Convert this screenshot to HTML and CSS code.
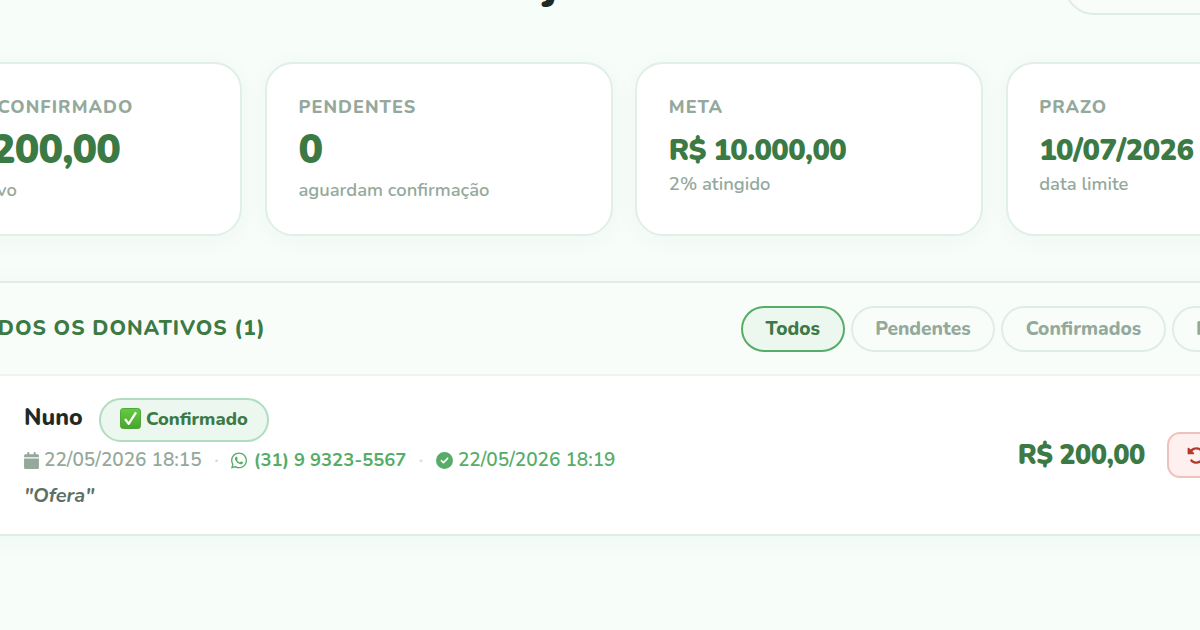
FILE: index.html
```html
<!DOCTYPE html>
<html lang="pt-BR">
<head>
  <meta charset="UTF-8">
  <meta name="viewport" content="width=device-width, initial-scale=1.0">
  <title>Donativos</title>
  <link rel="stylesheet" href="styles.css">
</head>
<body>
  <div class="page">
    <header class="page-header">
      <h1>Projeto</h1>
      <button class="btn-header" aria-label="Atualizar"></button>
    </header>

    <section class="stats">
      <div class="stat-card">
        <div class="stat-label">Total confirmado</div>
        <div class="stat-value">R$ 200,00</div>
        <div class="stat-sub">1 donativo</div>
      </div>
      <div class="stat-card">
        <div class="stat-label">Pendentes</div>
        <div class="stat-value">0</div>
        <div class="stat-sub">aguardam confirmação</div>
      </div>
      <div class="stat-card">
        <div class="stat-label">Meta</div>
        <div class="stat-value small">R$ 10.000,00</div>
        <div class="stat-sub">2% atingido</div>
      </div>
      <div class="stat-card">
        <div class="stat-label">Prazo</div>
        <div class="stat-value small">10/07/2026</div>
        <div class="stat-sub">data limite</div>
      </div>
    </section>

    <section class="panel">
      <div class="panel-header">
        <h2>Todos os donativos (1)</h2>
        <div class="filters">
          <button class="filter filter-all active">Todos</button>
          <button class="filter filter-pending">Pendentes</button>
          <button class="filter filter-confirmed">Confirmados</button>
          <button class="filter filter-rejected">Rejeitados</button>
        </div>
      </div>

      <div class="donation">
        <div class="donation-info">
          <div class="donor">
            <span class="donor-name">Nuno</span>
            <span class="badge">
              <svg class="check" viewBox="0 0 22 22">
                <defs>
                  <linearGradient id="checkFill" x1="0" y1="0" x2="0" y2="1">
                    <stop offset="0" stop-color="#66cb42"/>
                    <stop offset="1" stop-color="#46a52c"/>
                  </linearGradient>
                </defs>
                <rect x=".5" y=".5" width="21" height="21" rx="3" fill="url(#checkFill)" stroke="#4ba335"/>
                <path d="M5.300 11.500l3.800 5.100L16.800 4.600" fill="none" stroke="#fff" stroke-width="2.400" stroke-linejoin="round"/>
              </svg>
              <span>Confirmado</span>
            </span>
          </div>
          <div class="meta">
            <svg class="icon calendar" viewBox="0 0 448 512"><path d="M96 32V64H48C21.500 64 0 85.500 0 112v48H448V112c0-26.500-21.500-48-48-48H352V32c0-17.700-14.300-32-32-32s-32 14.300-32 32V64H160V32c0-17.700-14.300-32-32-32S96 14.300 96 32zM448 192H0V464c0 26.500 21.500 48 48 48H400c26.500 0 48-21.500 48-48V192z"/></svg>
            <span>22/05/2026 18:15</span>
            <span class="dot">·</span>
            <a class="phone" href="#">
              <svg class="icon whatsapp" viewBox="0 0 448 512"><path d="M380.900 97.100C339 55.100 283.200 32 223.900 32c-122.400 0-222 99.600-222 222 0 39.100 10.200 77.300 29.600 111L0 480l117.700-30.900c32.400 17.700 68.900 27 106.100 27h.1c122.300 0 224.100-99.600 224.100-222 0-59.300-25.200-115-67.100-157zm-157 341.600c-33.200 0-65.700-8.900-94-25.700l-6.700-4-69.800 18.300L72 359.200l-4.400-7c-18.500-29.400-28.200-63.300-28.200-98.200 0-101.700 82.800-184.500 184.600-184.500 49.300 0 95.600 19.200 130.400 54.100 34.800 34.900 56.200 81.200 56.100 130.500 0 101.800-84.900 184.600-186.600 184.600zm101.200-138.200c-5.500-2.800-32.800-16.200-37.900-18-5.100-1.900-8.800-2.800-12.500 2.800-3.700 5.600-14.300 18-17.600 21.800-3.200 3.700-6.500 4.200-12 1.400-32.600-16.300-54-29.100-75.500-66-5.700-9.800 5.700-9.100 16.300-30.300 1.800-3.700.9-6.900-.5-9.700-1.400-2.800-12.500-30.100-17.100-41.200-4.500-10.800-9.100-9.300-12.500-9.500-3.200-.2-6.900-.2-10.600-.2-3.700 0-9.700 1.400-14.800 6.900-5.100 5.600-19.400 19-19.400 46.300 0 27.300 19.900 53.700 22.600 57.400 2.800 3.700 39.100 59.700 94.800 83.800 35.200 15.200 49 16.500 66.600 13.900 10.700-1.600 32.800-13.400 37.400-26.400 4.600-13 4.600-24.100 3.200-26.400-1.300-2.500-5-3.900-10.500-6.600z"/></svg>
              <span class="number">(31) 9 9323-5567</span>
            </a>
            <span class="dot">·</span>
            <span class="confirmed">
              <svg class="icon circle-check" viewBox="0 0 512 512"><path d="M256 512A256 256 0 1 0 256 0a256 256 0 1 0 0 512zM369 209L241 337c-9.400 9.400-24.600 9.400-33.900 0l-64-64c-9.400-9.400-9.400-24.600 0-33.900s24.600-9.400 33.900 0l47 47L335 175c9.400-9.400 24.600-9.400 33.900 0s9.400 24.600 0 34z"/></svg>
              <span>22/05/2026 18:19</span>
            </span>
          </div>
          <div class="message">"Ofera"</div>
        </div>
        <div class="donation-side">
          <span class="amount">R$ 200,00</span>
          <button class="btn-undo" aria-label="Desfazer">
            <svg class="undo" viewBox="0 0 512 512"><path d="M48.500 224H40c-13.300 0-24-10.700-24-24V72c0-9.700 5.800-18.500 14.800-22.200s19.300-1.700 26.200 5.200L98.600 96.600c87.600-86.500 228.700-86.200 315.800 1c87.500 87.500 87.500 229.300 0 316.800s-229.300 87.500-316.800 0c-12.500-12.500-12.500-32.800 0-45.300s32.800-12.500 45.300 0c62.500 62.500 163.800 62.500 226.300 0s62.500-163.800 0-226.300c-62.200-62.200-162.700-62.500-225.300-1L185 183c6.900 6.900 8.900 17.200 5.200 26.200s-12.500 14.800-22.200 14.800H48.500z"/></svg>
          </button>
        </div>
      </div>
    </section>
  </div>
</body>
</html>
```
FILE: styles.css
```css
* {
  box-sizing: border-box;
}
body {
  margin: 0;
  height: 630px;
  overflow: hidden;
  background: #f7fdf9;
  color: #1e2b25;
  font-family: Nunito, Lato, sans-serif;
}
button {
  font-family: inherit;
  margin: 0;
  padding: 0;
}
.page {
  width: 1459px;
  margin: -45px 0 0 -105.5px;
}
.page-header {
  display: flex;
  justify-content: space-between;
  height: 107px;
  padding-left: 575px;
}
h1 {
  margin: 0;
  font-size: 44px;
  line-height: 60px;
  font-weight: 900;
}
.btn-header {
  width: 290px;
  height: 60px;
  border: 2px solid #e0ede6;
  border-radius: 30px;
  background: #f8fdf9;
}

/* summary cards */
.stats {
  display: grid;
  grid-template-columns: repeat(4, 1fr);
  gap: 22.5px;
}
.stat-card {
  height: 174px;
  padding: 32px 31.6px;
  background: #fff;
  border: 2px solid #e0efe7;
  border-radius: 28px;
  box-shadow: 0 4px 24px rgba(61, 122, 71, 0.04);
  white-space: nowrap;
}
.stat-label {
  color: #94a99c;
  font-size: 18px;
  line-height: 22px;
  font-weight: 800;
  letter-spacing: 1.05px;
  text-transform: uppercase;
}
.stat-value {
  margin-top: 9px;
  color: #3b7945;
  font-size: 41px;
  line-height: 45px;
  font-weight: 900;
  letter-spacing: -0.02em;
}
.stat-value.small {
  margin-top: 14px;
  font-size: 29.1px;
  line-height: 38px;
}
.stat-sub {
  margin-top: 7px;
  color: #94a99c;
  font-size: 18.4px;
  line-height: 22px;
  font-weight: 600;
}
.small + .stat-sub {
  margin-top: 3px;
}

/* donations list */
.panel {
  margin-top: 45px;
  background: #fff;
  border: 2px solid #e0ede6;
  border-radius: 28px;
  box-shadow: 0 4px 24px rgba(61, 122, 71, 0.04);
  overflow: hidden;
}
.panel-header {
  display: flex;
  align-items: center;
  height: 93px;
  padding-left: 70.5px;
  background: #f8fdf9;
  border-bottom: 2px solid #edf4f0;
}
h2 {
  width: 774px;
  margin: -2px 0 0;
  color: #3b7945;
  font-size: 20.8px;
  font-weight: 800;
  letter-spacing: 1px;
  text-transform: uppercase;
  white-space: nowrap;
}
.filters {
  display: flex;
  gap: 6.4px;
}
.filter {
  height: 46px;
  border: 2px solid #e0ede6;
  border-radius: 23px;
  background: transparent;
  color: #94a99c;
  font-size: 19.2px;
  font-weight: 800;
}
.filter.active {
  background: #ebf7ef;
  border-color: #55ad68;
  color: #3b7945;
}
.filter-all {
  width: 103.5px;
}
.filter-pending {
  width: 144px;
}
.filter-confirmed {
  width: 164.4px;
}
.filter-rejected {
  padding: 0 22px;
}
.donation {
  display: flex;
  height: 158px;
  padding: 22px 0 0 127.5px;
}
.donation-info {
  width: 993.8px;
}
.donor {
  display: flex;
  height: 44px;
}
.donor-name {
  width: 75px;
  font-size: 23.2px;
  line-height: 39px;
  font-weight: 800;
}
.badge {
  display: flex;
  align-items: center;
  gap: 5px;
  width: 170px;
  padding: 0 19px 3px;
  border: 2px solid #b0dcc0;
  border-radius: 22px;
  background: #ebf7ef;
  color: #3b7945;
  font-size: 18.4px;
  font-weight: 800;
}
.check {
  width: 21px;
  height: 21px;
  flex: none;
}
.meta {
  display: flex;
  align-items: center;
  height: 36px;
  color: #94a99c;
  font-size: 19px;
  font-weight: 600;
  white-space: nowrap;
}
.icon {
  height: 17px;
  flex: none;
  fill: currentColor;
}
.calendar {
  width: 15px;
  margin-right: 5px;
}
.dot {
  width: 29.6px;
  color: #d0ddd5;
  text-align: center;
}
.phone,
.confirmed {
  display: flex;
  align-items: center;
  color: #55ad68;
  text-decoration: none;
}
.phone {
  font-size: 18.4px;
  font-weight: 700;
}
.number {
  padding-bottom: 2px;
}
.whatsapp {
  width: 16px;
  height: 19px;
  margin-right: 6.6px;
}
.circle-check {
  width: 17px;
  margin-right: 5px;
}
.message {
  color: #5c7065;
  font-size: 20px;
  line-height: 36px;
  font-style: italic;
  font-weight: 700;
}
.donation-side {
  display: flex;
  align-items: center;
  height: 114px;
}
.amount {
  width: 149px;
  color: #3b7945;
  font-size: 27.1px;
  font-weight: 900;
  letter-spacing: -0.02em;
  white-space: nowrap;
}
.btn-undo {
  display: flex;
  align-items: center;
  width: 56px;
  height: 46px;
  padding-left: 18px;
  border: 2px solid #efc1bd;
  border-radius: 13px;
  background: #fdf0ef;
  color: #b33a2c;
}
.undo {
  width: 19px;
  height: 19px;
  fill: currentColor;
}
```
